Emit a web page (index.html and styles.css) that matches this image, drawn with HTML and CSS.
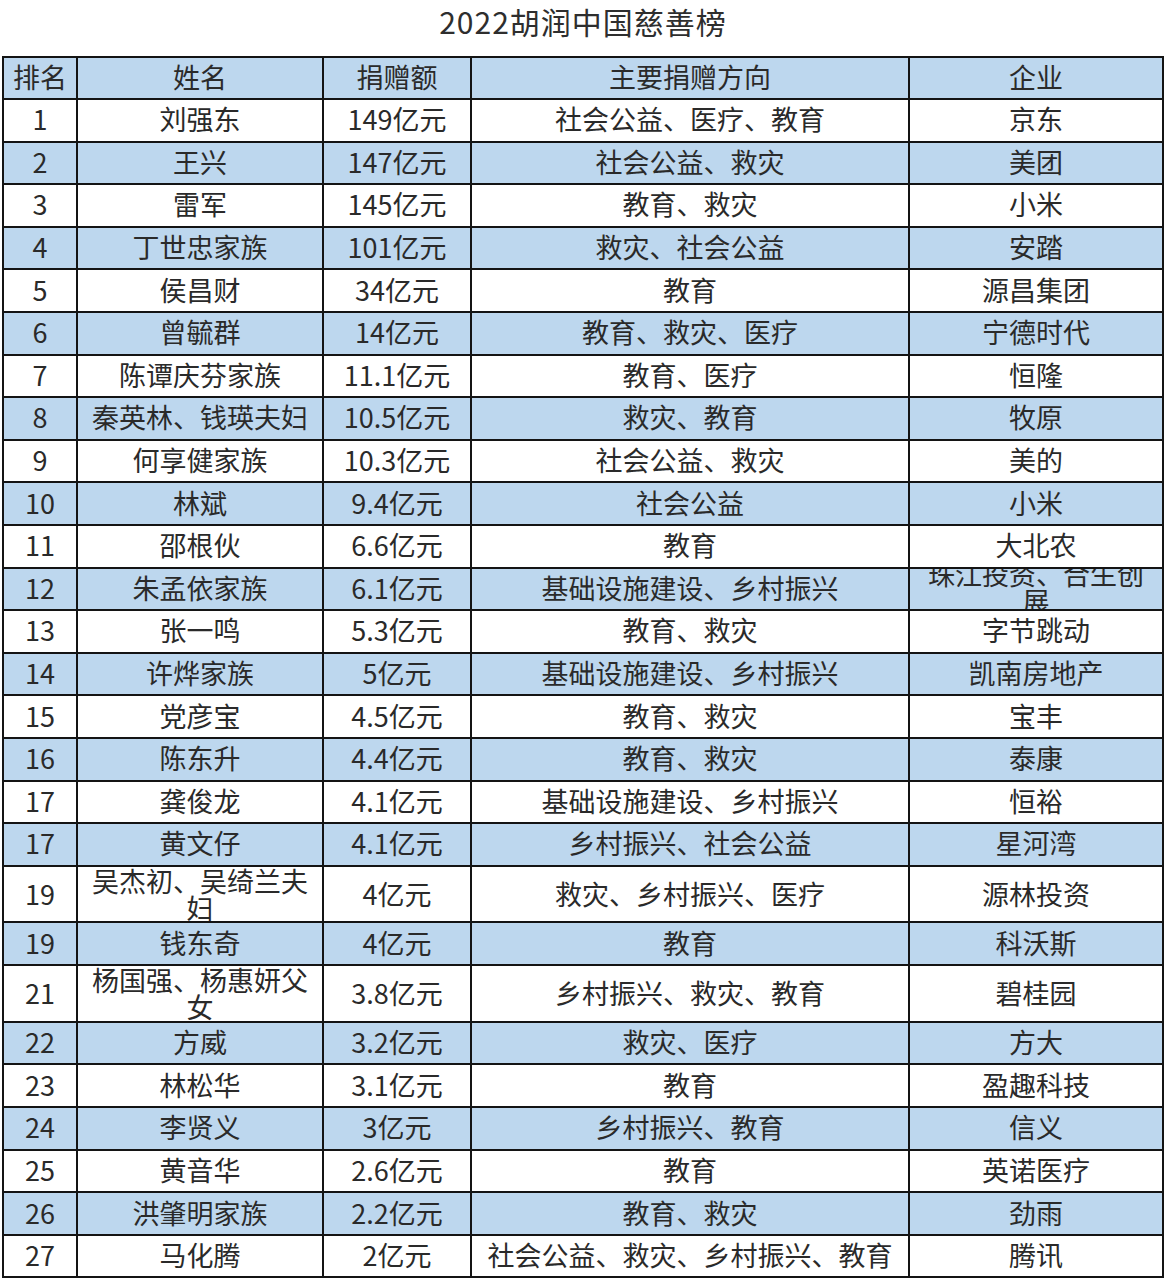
FILE: index.html
```html
<!DOCTYPE html>
<html lang="zh-CN">
<head>
<meta charset="utf-8">
<title>2022胡润中国慈善榜</title>
<link rel="stylesheet" href="styles.css">
</head>
<body>
<h1 class="title">2022胡润中国慈善榜</h1>
<table class="rank">
<colgroup>
<col class="w-rank"><col class="w-name"><col class="w-amt"><col class="w-dir"><col class="w-corp">
</colgroup>
<thead>
<tr class="alt"><td><div class="c">排名</div></td><td><div class="c">姓名</div></td><td><div class="c">捐赠额</div></td><td><div class="c">主要捐赠方向</div></td><td><div class="c">企业</div></td></tr>
</thead>
<tbody>
<tr><td><div class="c">1</div></td><td><div class="c">刘强东</div></td><td><div class="c">149亿元</div></td><td><div class="c">社会公益、医疗、教育</div></td><td><div class="c">京东</div></td></tr>
<tr class="alt"><td><div class="c">2</div></td><td><div class="c">王兴</div></td><td><div class="c">147亿元</div></td><td><div class="c">社会公益、救灾</div></td><td><div class="c">美团</div></td></tr>
<tr><td><div class="c">3</div></td><td><div class="c">雷军</div></td><td><div class="c">145亿元</div></td><td><div class="c">教育、救灾</div></td><td><div class="c">小米</div></td></tr>
<tr class="alt"><td><div class="c">4</div></td><td><div class="c">丁世忠家族</div></td><td><div class="c">101亿元</div></td><td><div class="c">救灾、社会公益</div></td><td><div class="c">安踏</div></td></tr>
<tr><td><div class="c">5</div></td><td><div class="c">侯昌财</div></td><td><div class="c">34亿元</div></td><td><div class="c">教育</div></td><td><div class="c">源昌集团</div></td></tr>
<tr class="alt"><td><div class="c">6</div></td><td><div class="c">曾毓群</div></td><td><div class="c">14亿元</div></td><td><div class="c">教育、救灾、医疗</div></td><td><div class="c">宁德时代</div></td></tr>
<tr><td><div class="c">7</div></td><td><div class="c">陈谭庆芬家族</div></td><td><div class="c">11.1亿元</div></td><td><div class="c">教育、医疗</div></td><td><div class="c">恒隆</div></td></tr>
<tr class="alt"><td><div class="c">8</div></td><td><div class="c">秦英林、钱瑛夫妇</div></td><td><div class="c">10.5亿元</div></td><td><div class="c">救灾、教育</div></td><td><div class="c">牧原</div></td></tr>
<tr><td><div class="c">9</div></td><td><div class="c">何享健家族</div></td><td><div class="c">10.3亿元</div></td><td><div class="c">社会公益、救灾</div></td><td><div class="c">美的</div></td></tr>
<tr class="alt"><td><div class="c">10</div></td><td><div class="c">林斌</div></td><td><div class="c">9.4亿元</div></td><td><div class="c">社会公益</div></td><td><div class="c">小米</div></td></tr>
<tr><td><div class="c">11</div></td><td><div class="c">邵根伙</div></td><td><div class="c">6.6亿元</div></td><td><div class="c">教育</div></td><td><div class="c">大北农</div></td></tr>
<tr class="alt"><td><div class="c">12</div></td><td><div class="c">朱孟依家族</div></td><td><div class="c">6.1亿元</div></td><td><div class="c">基础设施建设、乡村振兴</div></td><td><div class="c">珠江投资、合生创展</div></td></tr>
<tr><td><div class="c">13</div></td><td><div class="c">张一鸣</div></td><td><div class="c">5.3亿元</div></td><td><div class="c">教育、救灾</div></td><td><div class="c">字节跳动</div></td></tr>
<tr class="alt"><td><div class="c">14</div></td><td><div class="c">许烨家族</div></td><td><div class="c">5亿元</div></td><td><div class="c">基础设施建设、乡村振兴</div></td><td><div class="c">凯南房地产</div></td></tr>
<tr><td><div class="c">15</div></td><td><div class="c">党彦宝</div></td><td><div class="c">4.5亿元</div></td><td><div class="c">教育、救灾</div></td><td><div class="c">宝丰</div></td></tr>
<tr class="alt"><td><div class="c">16</div></td><td><div class="c">陈东升</div></td><td><div class="c">4.4亿元</div></td><td><div class="c">教育、救灾</div></td><td><div class="c">泰康</div></td></tr>
<tr><td><div class="c">17</div></td><td><div class="c">龚俊龙</div></td><td><div class="c">4.1亿元</div></td><td><div class="c">基础设施建设、乡村振兴</div></td><td><div class="c">恒裕</div></td></tr>
<tr class="alt"><td><div class="c">17</div></td><td><div class="c">黄文仔</div></td><td><div class="c">4.1亿元</div></td><td><div class="c">乡村振兴、社会公益</div></td><td><div class="c">星河湾</div></td></tr>
<tr class="tall"><td><div class="c">19</div></td><td><div class="c">吴杰初、吴绮兰夫妇</div></td><td><div class="c">4亿元</div></td><td><div class="c">救灾、乡村振兴、医疗</div></td><td><div class="c">源林投资</div></td></tr>
<tr class="alt"><td><div class="c">19</div></td><td><div class="c">钱东奇</div></td><td><div class="c">4亿元</div></td><td><div class="c">教育</div></td><td><div class="c">科沃斯</div></td></tr>
<tr class="tall"><td><div class="c">21</div></td><td><div class="c">杨国强、杨惠妍父女</div></td><td><div class="c">3.8亿元</div></td><td><div class="c">乡村振兴、救灾、教育</div></td><td><div class="c">碧桂园</div></td></tr>
<tr class="alt"><td><div class="c">22</div></td><td><div class="c">方威</div></td><td><div class="c">3.2亿元</div></td><td><div class="c">救灾、医疗</div></td><td><div class="c">方大</div></td></tr>
<tr><td><div class="c">23</div></td><td><div class="c">林松华</div></td><td><div class="c">3.1亿元</div></td><td><div class="c">教育</div></td><td><div class="c">盈趣科技</div></td></tr>
<tr class="alt"><td><div class="c">24</div></td><td><div class="c">李贤义</div></td><td><div class="c">3亿元</div></td><td><div class="c">乡村振兴、教育</div></td><td><div class="c">信义</div></td></tr>
<tr><td><div class="c">25</div></td><td><div class="c">黄音华</div></td><td><div class="c">2.6亿元</div></td><td><div class="c">教育</div></td><td><div class="c">英诺医疗</div></td></tr>
<tr class="alt"><td><div class="c">26</div></td><td><div class="c">洪肇明家族</div></td><td><div class="c">2.2亿元</div></td><td><div class="c">教育、救灾</div></td><td><div class="c">劲雨</div></td></tr>
<tr><td><div class="c">27</div></td><td><div class="c">马化腾</div></td><td><div class="c">2亿元</div></td><td><div class="c">社会公益、救灾、乡村振兴、教育</div></td><td><div class="c">腾讯</div></td></tr>
</tbody>
</table>
</body>
</html>
```
FILE: styles.css
```css
html, body {
  margin: 0;
  padding: 0;
  background: #ffffff;
}

body {
  font-family: "Noto Sans CJK SC", "Noto Sans", sans-serif;
  color: #2a2a2a;
}

.title {
  margin: 0;
  height: 56px;
  line-height: 42px;
  text-align: center;
  font-size: 30px;
  font-weight: 400;
  letter-spacing: 1px;
  color: #2e2e2e;
}

.rank {
  border-collapse: collapse;
  table-layout: fixed;
  width: 1162px;
  margin-left: 2px;
}

.w-rank { width: 74px; }
.w-name { width: 246px; }
.w-amt { width: 148px; }
.w-dir { width: 438px; }
.w-corp { width: 254px; }

.rank td {
  border: 2px solid #141414;
  padding: 0;
  background: #ffffff;
}

.rank tr.alt td {
  background: #bdd7ee;
}

.c {
  height: 37.6px;
  padding: 0 8px 3px;
  display: flex;
  align-items: center;
  justify-content: center;
  text-align: center;
  overflow: hidden;
  font-size: 27px;
  line-height: 27px;
}

.rank thead .c {
  height: 37px;
}

.rank tr.tall .c {
  height: 53.8px;
  padding-bottom: 1px;
}
```
